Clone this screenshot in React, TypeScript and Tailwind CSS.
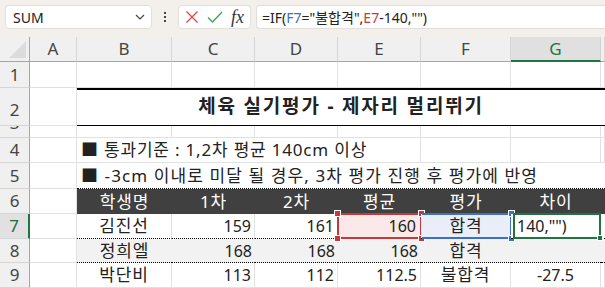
import React from "react";

const font = "font-['Noto_Sans','Noto_Sans_CJK_KR',sans-serif]";

const cols = ["A", "B", "C", "D", "E", "F", "G", ""];

const Grid = ({ className = "", children }: { className?: string; children?: React.ReactNode }) => (
  <div className={`border-r border-b border-[#e1e1e1] bg-white flex items-center overflow-hidden ${className}`}>
    {children}
  </div>
);

const RowHead = ({ n, active = false, className = "" }: { n: string; active?: boolean; className?: string }) => (
  <div
    className={`flex items-center justify-center overflow-hidden border-b border-[#d6d6d6] text-[17px] ${
      active
        ? "bg-[#e1e1e1] text-[#1e6b40] border-r-2 border-r-[#217346]"
        : "bg-[#f0f0f0] text-[#444] border-r border-r-[#a5a5a5]"
    } ${className}`}
  >
    {n}
  </div>
);

const Handle = ({ color, pos }: { color: string; pos: string }) => (
  <span className={`absolute w-[7px] h-[7px] border border-white ${color} ${pos}`} />
);

// korean text is a bit wider in the original (Malgun Gothic)
const ko = "text-[17px] tracking-[0.8px]";

export default function App() {
  const dotted = "border-b border-b-black border-dotted";
  return (
    <div className={`w-[605px] h-[288px] overflow-hidden bg-white ${font} text-[#222]`}>
      {/* formula bar */}
      <div className="h-[37px] bg-[#f3efeb] flex items-start pt-[5px] pl-[5px] gap-[5px]">
        <div className="w-[147px] h-[24px] bg-white rounded-[4px] border border-[#e2ded9] flex items-center justify-between pl-[7px] pr-[6px] text-[14px]">
          <span>SUM</span>
          <svg width="10" height="6" viewBox="0 0 10 6">
            <path d="M1 1l4 4 4-4" stroke="#444" strokeWidth="1.2" fill="none" />
          </svg>
        </div>
        <div className="w-[16px] h-[24px] flex flex-col items-center justify-center gap-[2px]">
          <span className="w-[2px] h-[2px] bg-[#444]" />
          <span className="w-[2px] h-[2px] bg-[#444]" />
          <span className="w-[2px] h-[2px] bg-[#444]" />
        </div>
        <div className="w-[73px] h-[24px] bg-white rounded-[4px] border border-[#e2ded9] flex items-center pl-[6px] gap-[8px]">
          <svg width="14" height="14" viewBox="0 0 14 14">
            <path d="M1.5 1.5l11 11M12.5 1.5l-11 11" stroke="#e0454a" strokeWidth="1.3" />
          </svg>
          <svg width="16" height="14" viewBox="0 0 16 14">
            <path d="M1 7.5l4.5 4.5L15 2" stroke="#3aa35b" strokeWidth="1.3" fill="none" />
          </svg>
          <span className="font-['Liberation_Serif',serif] italic text-[18px] leading-none text-[#333]">fx</span>
        </div>
        <div className="flex-1 h-[24px] bg-white rounded-l-[4px] border border-r-0 border-[#e2ded9] flex items-center pl-[5px] text-[14px] whitespace-nowrap">
          <span>=IF(</span>
          <span className="text-[#3b6fc6]">F7</span>
          <span>="불합격",</span>
          <span className="text-[#c73a3c]">E7</span>
          <span>-140,"")</span>
        </div>
      </div>

      {/* sheet */}
      <div className="grid grid-cols-[30px_47px_95px_83px_83px_83px_90px_90px_1fr] grid-rows-[25px_26px_38px_12px_25px_26px_25px_25px_24px_25px] text-[16px]">
        {/* header row */}
        <div className="bg-[#f0f0f0] border-r border-r-[#a5a5a5] border-b border-b-[#a5a5a5] relative overflow-hidden">
          <svg className="absolute right-[3px] bottom-[3px]" width="17" height="17" viewBox="0 0 17 17">
            <path d="M17 0V17H0Z" fill="#dcdcdc" />
          </svg>
        </div>
        {cols.map((c) => (
          <div
            key={c || "H"}
            className={`flex items-center justify-center text-[17px] ${
              c === "G"
                ? "bg-[#e0e0e0] text-[#217346] border-b-2 border-b-[#217346] border-r border-r-[#d0d0d0]"
                : "bg-[#f0f0f0] text-[#444] border-b border-b-[#a5a5a5] border-r border-r-[#d6d6d6]"
            }`}
          >
            {c}
          </div>
        ))}

        {/* row 1 */}
        <RowHead n="1" />
        {cols.map((c) => (
          <Grid key={"r1" + c} />
        ))}

        {/* row 2 title */}
        <RowHead n="2" className="items-end pb-[3px]" />
        <Grid />
        <div className="col-span-7 border-t-2 border-t-black border-b border-b-black flex items-end justify-center pb-[5px] font-bold text-[19px] tracking-[1.8px]">
          체육 실기평가 - 제자리 멀리뛰기
        </div>

        {/* row 3, mostly hidden by its small height */}
        <div className="bg-[#f0f0f0] border-r border-r-[#a5a5a5] border-b border-[#d6d6d6] overflow-hidden flex justify-center">
          <span className="text-[17px] text-[#444] leading-[20px] -mt-[13px]">3</span>
        </div>
        {cols.map((c) => (
          <Grid key={"r3" + c} />
        ))}

        {/* row 4 */}
        <RowHead n="4" />
        <Grid />
        <div className={`border-r border-b border-[#e1e1e1] flex items-center overflow-hidden col-span-4 pl-[4px] whitespace-nowrap ${ko}`}>
          ■ 통과기준 : 1,2차 평균 140cm 이상
        </div>
        <Grid />
        <Grid />
        <Grid />

        {/* row 5 */}
        <RowHead n="5" />
        <Grid />
        <div className={`col-span-7 ${dotted} flex items-center pl-[4px] whitespace-nowrap overflow-hidden text-[17px] tracking-[1.1px]`}>
          ■ -3cm 이내로 미달 될 경우, 3차 평가 진행 후 평가에 반영
        </div>

        {/* row 6 header */}
        <RowHead n="6" />
        <Grid />
        {["학생명", "1차", "2차", "평균", "평가", "차이", ""].map((t, i) => (
          <div key={"h" + i} className={`bg-[#404040] text-white flex items-center justify-center ${ko}`}>
            {t}
          </div>
        ))}

        {/* row 7 */}
        <RowHead n="7" active />
        <Grid />
        <div className={`border-r border-r-[#e1e1e1] ${dotted} flex items-center justify-center ${ko}`} style={{ borderRightStyle: "solid" }}>
          김진선
        </div>
        <div className={`border-r border-r-[#e1e1e1] ${dotted} flex items-center justify-end pr-[3px]`} style={{ borderRightStyle: "solid" }}>
          159
        </div>
        <div className={`${dotted} flex items-center justify-end pr-[4px]`}>161</div>
        <div className={`relative bg-[#fbe9e9] flex items-center justify-end pr-[5px] ${dotted}`}>
          160
          <span className="absolute -left-[1px] -top-[1px] -right-[1px] -bottom-[1px] border-2 border-[#c2393c]" />
          <Handle color="bg-[#c2393c]" pos="-left-[4px] -top-[4px]" />
          <Handle color="bg-[#c2393c]" pos="-right-[4px] -top-[4px]" />
          <Handle color="bg-[#c2393c]" pos="-left-[4px] -bottom-[4px]" />
          <Handle color="bg-[#c2393c]" pos="-right-[4px] -bottom-[4px]" />
        </div>
        <div className={`relative bg-[#e9eef8] flex items-center justify-center ${dotted} ${ko}`}>
          합격
          <span className="absolute left-[1px] -top-[1px] -right-[1px] -bottom-[1px] border-2 border-l-0 border-[#3f6fc4]" />
          <Handle color="bg-[#3f6fc4]" pos="-right-[4px] -top-[4px]" />
          <Handle color="bg-[#3f6fc4]" pos="-right-[4px] -bottom-[4px]" />
        </div>
        <div className={`relative bg-white flex items-center pl-[6px] ${dotted}`}>
          140,"")
          <span className="absolute left-[2px] -top-[1px] right-0 -bottom-[1px] border-2 border-[#217346]" />
          <span className="absolute w-[6px] h-[6px] bg-[#217346] border border-white -right-[2px] -bottom-[3px]" />
        </div>
        <div className={`bg-white ${dotted}`} />

        {/* row 8 */}
        <RowHead n="8" />
        <Grid />
        <div className={`bg-[#f2f2f2] flex items-center justify-center ${dotted} ${ko}`}>정희엘</div>
        <div className={`bg-[#f2f2f2] flex items-center justify-end pr-[3px] ${dotted}`}>168</div>
        <div className={`bg-[#f2f2f2] flex items-center justify-end pr-[3px] ${dotted}`}>168</div>
        <div className={`bg-[#f2f2f2] flex items-center justify-end pr-[3px] ${dotted}`}>168</div>
        <div className={`bg-[#f2f2f2] flex items-center justify-center ${dotted} ${ko}`}>합격</div>
        <div className={`bg-[#f2f2f2] ${dotted}`} />
        <div className={`bg-[#f2f2f2] ${dotted}`} />

        {/* row 9 */}
        <RowHead n="9" />
        <Grid />
        <Grid className={`justify-center ${ko}`}>박단비</Grid>
        <Grid className="justify-end pr-[3px]">113</Grid>
        <Grid className="justify-end pr-[3px]">112</Grid>
        <Grid className="justify-end pr-[3px]">112.5</Grid>
        <Grid className={`justify-center ${ko}`}>불합격</Grid>
        <Grid className="justify-center">-27.5</Grid>
        <Grid />
      </div>
    </div>
  );
}
